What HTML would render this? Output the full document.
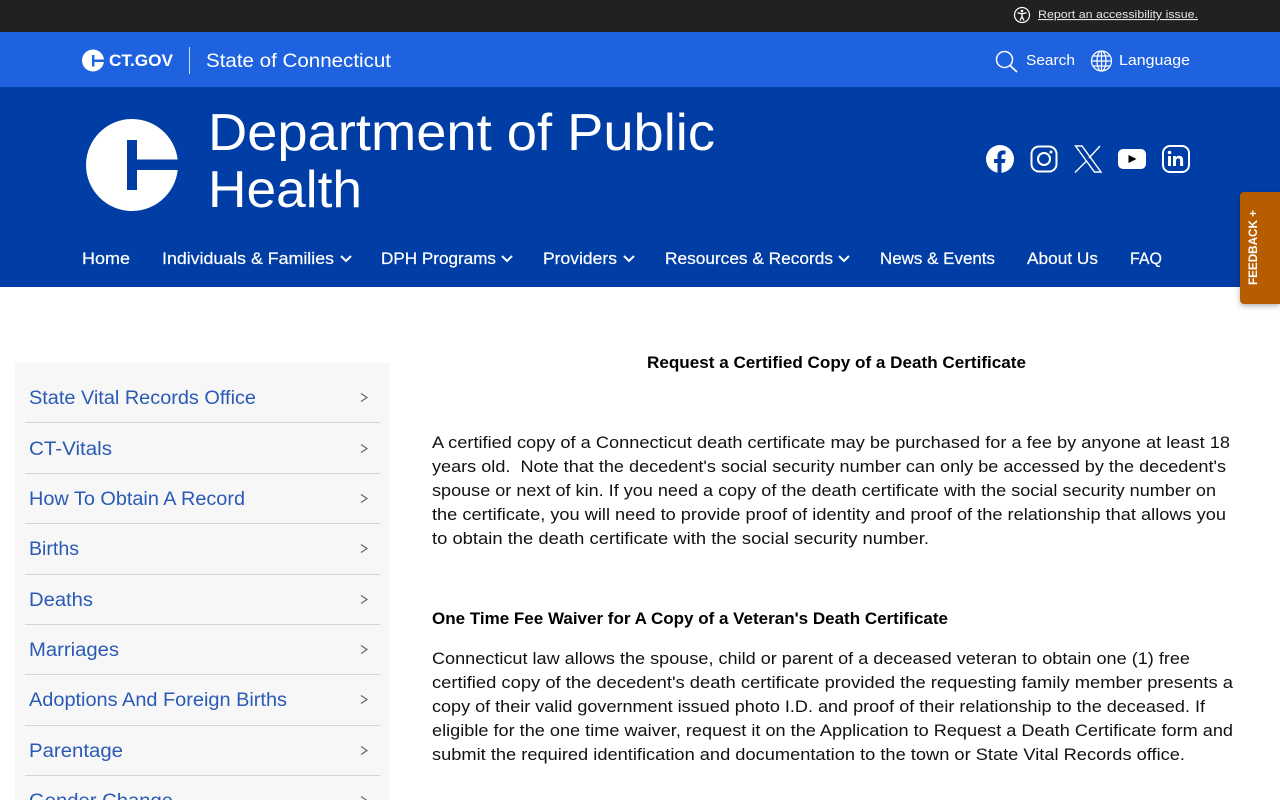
<!DOCTYPE html>
<html lang="en">
<head>
<meta charset="utf-8">
<title>Request a Certified Copy of a Death Certificate</title>
<style>
html,body{margin:0;padding:0;width:1280px;height:800px;overflow:hidden;background:#fff}
svg{display:block;position:absolute;left:0;top:0}
text{font-family:"Liberation Sans",sans-serif;white-space:pre}
.w{fill:#fff}
.nav{font-size:16.5px;fill:#fff;stroke:#fff;stroke-width:.2}
.side{font-size:19px;fill:#2a5ab5}
.body{font-size:16.5px;fill:#111}
.b{font-size:16.5px;font-weight:bold;fill:#000}
.chev{fill:none;stroke:#666;stroke-width:1.2}
.nchev{fill:none;stroke:#fff;stroke-width:2}
.ic{fill:none;stroke:#fff}
</style>
</head>
<body>
<svg width="1280" height="800" viewBox="0 0 1280 800" xmlns="http://www.w3.org/2000/svg">
<defs>
<filter id="sh" x="-30%" y="-20%" width="160%" height="140%"><feDropShadow dx="0" dy="2" stdDeviation="3" flood-color="#000" flood-opacity=".3"/></filter>
</defs>

<rect width="1280" height="32" fill="#212121"/>
<rect y="32" width="1280" height="55" fill="#1f62e0"/>
<rect y="87" width="1280" height="200" fill="#003da5"/>

<!-- accessibility -->
<circle class="ic" cx="1022" cy="15" r="7.5" stroke-width="1.2"/>
<circle cx="1022" cy="11" r="1.3" fill="#fff"/>
<path class="ic" stroke-width="1.3" d="M1017.5 12.8l4.5 1 4.5-1M1022 13.8v3M1022 16.5l-2 4M1022 16.5l2 4"/>
<text x="1038" y="18" font-size="11" fill="#e6e6e6" textLength="160" lengthAdjust="spacingAndGlyphs" text-decoration="underline">Report an accessibility issue.</text>

<!-- CT.GOV -->
<circle cx="93" cy="60.500" r="11" fill="#fff"/>
<rect x="92" y="55" width="2.400" height="11.500" fill="#1f62e0"/>
<rect x="94" y="59.500" width="11" height="2.500" fill="#1f62e0"/>
<text x="109" y="66" font-size="16.500" font-weight="bold" class="w" textLength="64" lengthAdjust="spacingAndGlyphs">CT.GOV</text>
<rect x="189" y="47" width="1" height="27" fill="#cfdcf8"/>
<text x="206" y="67" font-size="19.500" class="w" textLength="185" lengthAdjust="spacingAndGlyphs">State of Connecticut</text>

<!-- search / language -->
<circle class="ic" cx="1004.500" cy="59.500" r="8" stroke-width="1.500"/>
<path class="ic" stroke-width="1.700" d="M1010 65.500l7 6.500"/>
<text x="1026" y="65" font-size="15" class="w" textLength="49" lengthAdjust="spacingAndGlyphs">Search</text>
<g class="ic" stroke-width="1.200">
<circle cx="1101.500" cy="61" r="10"/>
<ellipse cx="1101.500" cy="61" rx="4.500" ry="10"/>
<path d="M1101.500 51v20M1091.500 61h20M1093 56h17M1093 66h17"/>
</g>
<text x="1119" y="65" font-size="15" class="w" textLength="71" lengthAdjust="spacingAndGlyphs">Language</text>

<!-- logo -->
<circle cx="132" cy="165" r="46" fill="#fff"/>
<rect x="127" y="140" width="10" height="50" fill="#003da5"/>
<rect x="137" y="159.500" width="43" height="10.500" fill="#003da5"/>
<text x="208" y="150" font-size="52" class="w" textLength="507" lengthAdjust="spacingAndGlyphs">Department of Public</text>
<text x="208" y="207" font-size="52" class="w" textLength="154" lengthAdjust="spacingAndGlyphs">Health</text>

<!-- social -->
<circle cx="1000" cy="159" r="14" fill="#fff"/>
<path fill="#003da5" d="M997.500 173.500v-10.500h-3.500v-4h3.500v-3c0-3.500 2-5.500 5.200-5.500 1.500 0 2.800.2 2.800.2v3.500h-1.700c-1.700 0-2.300 1-2.300 2.200v2.600h3.900l-.6 4h-3.300v10.500z"/>
<rect class="ic" x="1031.500" y="146.500" width="25" height="25" rx="7.500" stroke-width="2"/>
<circle class="ic" cx="1044" cy="159" r="6" stroke-width="2"/>
<circle cx="1051" cy="152" r="1.500" fill="#fff"/>
<path class="ic" stroke-width="1.400" d="M1075.500 146h6.500l19 26h-6.500zM1100 146l-11 12M1086 161.500l-11 11"/>
<rect x="1118" y="149" width="28" height="20" rx="5" fill="#fff"/>
<path d="M1128.500 155l8 4-8 4z" fill="#000"/>
<rect class="ic" x="1163" y="146" width="26" height="26" rx="7" stroke-width="2"/>
<rect x="1168" y="156" width="3" height="10" fill="#fff"/>
<circle cx="1169.500" cy="152.500" r="1.800" fill="#fff"/>
<path fill="#fff" d="M1173 156h2.800v1.500c.6-1 1.700-1.800 3.300-1.800 2.900 0 4 1.800 4 4.800v5.500h-3v-5c0-1.600-.5-2.600-1.800-2.600-1.500 0-2.300 1-2.300 2.700v4.900h-3z"/>

<!-- nav -->
<text class="nav" x="82" y="264" textLength="48" lengthAdjust="spacingAndGlyphs">Home</text>
<text class="nav" x="162" y="264" textLength="172" lengthAdjust="spacingAndGlyphs">Individuals &amp; Families</text>
<path class="nchev" d="M341 256l5 5 5-5"/>
<text class="nav" x="381" y="264" textLength="115" lengthAdjust="spacingAndGlyphs">DPH Programs</text>
<path class="nchev" d="M502 256l5 5 5-5"/>
<text class="nav" x="543" y="264" textLength="74" lengthAdjust="spacingAndGlyphs">Providers</text>
<path class="nchev" d="M624 256l5 5 5-5"/>
<text class="nav" x="665" y="264" textLength="168" lengthAdjust="spacingAndGlyphs">Resources &amp; Records</text>
<path class="nchev" d="M839 256l5 5 5-5"/>
<text class="nav" x="880" y="264" textLength="115" lengthAdjust="spacingAndGlyphs">News &amp; Events</text>
<text class="nav" x="1027" y="264" textLength="71" lengthAdjust="spacingAndGlyphs">About Us</text>
<text class="nav" x="1130" y="264" textLength="32" lengthAdjust="spacingAndGlyphs">FAQ</text>

<!-- feedback -->
<path d="M1280 192h-36a4 4 0 0 0-4 4v104a4 4 0 0 0 4 4h36z" fill="#b85c00" filter="url(#sh)"/>
<text transform="translate(1257,285) rotate(-90)" font-size="11.500" font-weight="bold" class="w" textLength="75" lengthAdjust="spacingAndGlyphs">FEEDBACK +</text>

<!-- sidebar -->
<rect x="15" y="363" width="375" height="437" fill="#f7f7f7"/>
<g fill="#d5d5d5">
<rect x="25" y="422" width="355" height="1"/>
<rect x="25" y="473" width="355" height="1"/>
<rect x="25" y="523" width="355" height="1"/>
<rect x="25" y="574" width="355" height="1"/>
<rect x="25" y="624" width="355" height="1"/>
<rect x="25" y="674" width="355" height="1"/>
<rect x="25" y="725" width="355" height="1"/>
<rect x="25" y="775" width="355" height="1"/>
</g>
<text class="side" x="29" y="404" textLength="227" lengthAdjust="spacingAndGlyphs">State Vital Records Office</text>
<text class="side" x="29" y="455" textLength="83" lengthAdjust="spacingAndGlyphs">CT-Vitals</text>
<text class="side" x="29" y="505" textLength="216" lengthAdjust="spacingAndGlyphs">How To Obtain A Record</text>
<text class="side" x="29" y="555" textLength="50" lengthAdjust="spacingAndGlyphs">Births</text>
<text class="side" x="29" y="606" textLength="64" lengthAdjust="spacingAndGlyphs">Deaths</text>
<text class="side" x="29" y="656" textLength="90" lengthAdjust="spacingAndGlyphs">Marriages</text>
<text class="side" x="29" y="706" textLength="258" lengthAdjust="spacingAndGlyphs">Adoptions And Foreign Births</text>
<text class="side" x="29" y="757" textLength="94" lengthAdjust="spacingAndGlyphs">Parentage</text>
<text class="side" x="29" y="807" textLength="144" lengthAdjust="spacingAndGlyphs">Gender Change</text>
<path class="chev" d="M361 393.500l6 4-6 4M361 444.500l6 4-6 4M361 494.500l6 4-6 4M361 544.500l6 4-6 4M361 595.500l6 4-6 4M361 645.500l6 4-6 4M361 695.500l6 4-6 4M361 746.500l6 4-6 4M361 796.500l6 4-6 4"/>

<!-- main -->
<text class="b" x="647" y="368" textLength="379" lengthAdjust="spacingAndGlyphs">Request a Certified Copy of a Death Certificate</text>

<text class="body" x="432" y="448" textLength="798" lengthAdjust="spacingAndGlyphs">A certified copy of a Connecticut death certificate may be purchased for a fee by anyone at least 18</text>
<text class="body" x="432" y="472" textLength="794" lengthAdjust="spacingAndGlyphs">years old.  Note that the decedent's social security number can only be accessed by the decedent's</text>
<text class="body" x="432" y="496" textLength="784" lengthAdjust="spacingAndGlyphs">spouse or next of kin. If you need a copy of the death certificate with the social security number on</text>
<text class="body" x="432" y="520" textLength="794" lengthAdjust="spacingAndGlyphs">the certificate, you will need to provide proof of identity and proof of the relationship that allows you</text>
<text class="body" x="432" y="544" textLength="497" lengthAdjust="spacingAndGlyphs">to obtain the death certificate with the social security number.</text>

<text class="b" x="432" y="624" textLength="516" lengthAdjust="spacingAndGlyphs">One Time Fee Waiver for A Copy of a Veteran's Death Certificate</text>

<text class="body" x="432" y="664" textLength="758" lengthAdjust="spacingAndGlyphs">Connecticut law allows the spouse, child or parent of a deceased veteran to obtain one (1) free</text>
<text class="body" x="432" y="688" textLength="801" lengthAdjust="spacingAndGlyphs">certified copy of the decedent's death certificate provided the requesting family member presents a</text>
<text class="body" x="432" y="712" textLength="773" lengthAdjust="spacingAndGlyphs">copy of their valid government issued photo I.D. and proof of their relationship to the deceased. If</text>
<text class="body" x="432" y="736" textLength="801" lengthAdjust="spacingAndGlyphs">eligible for the one time waiver, request it on the Application to Request a Death Certificate form and</text>
<text class="body" x="432" y="760" textLength="753" lengthAdjust="spacingAndGlyphs">submit the required identification and documentation to the town or State Vital Records office.</text>
</svg>
</body>
</html>
